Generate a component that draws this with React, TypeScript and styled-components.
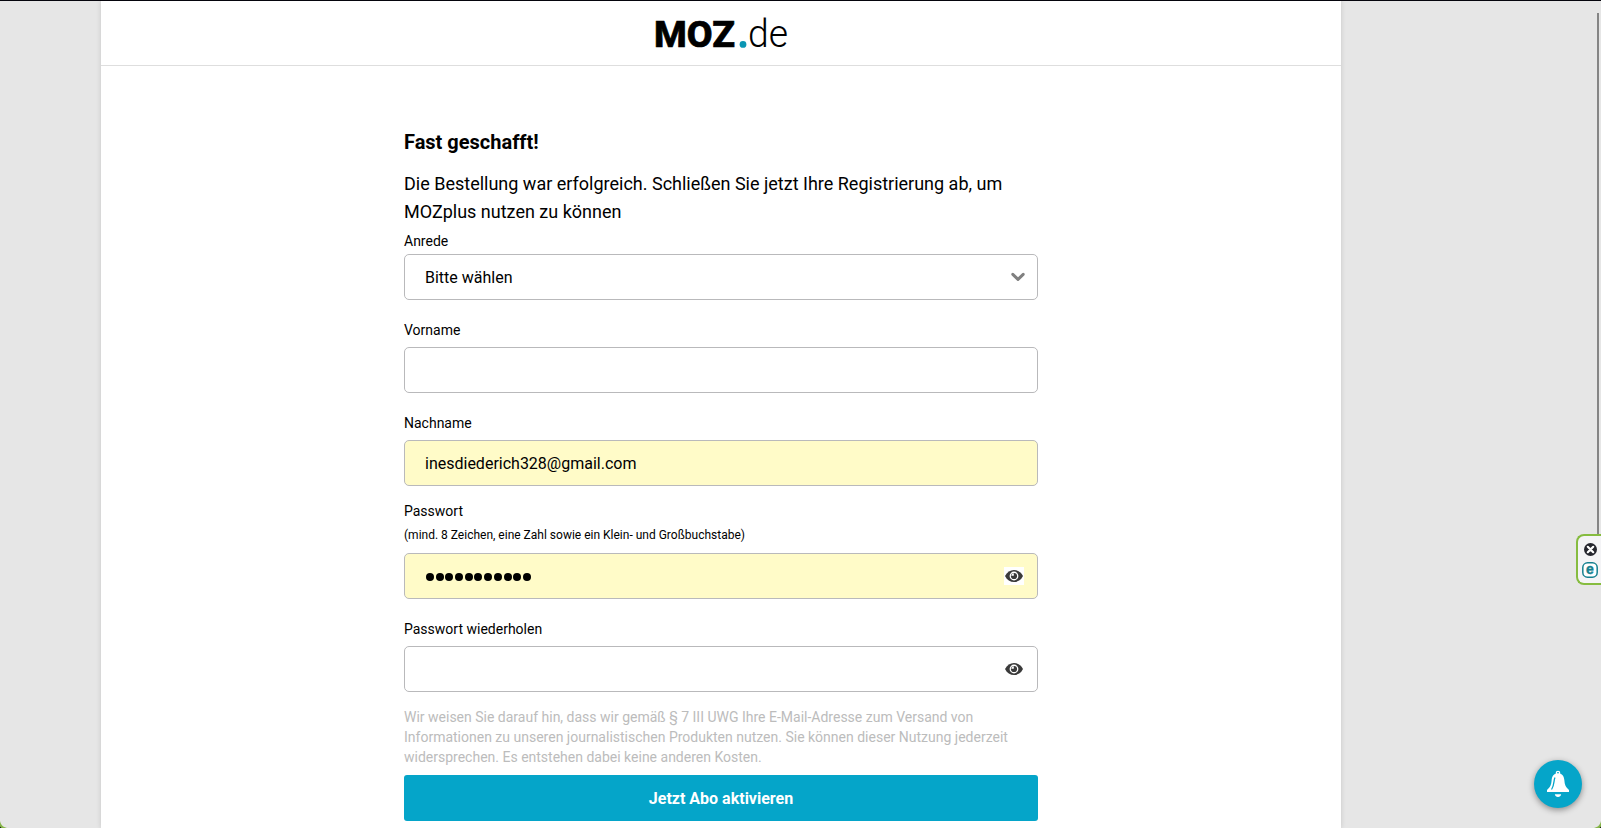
import React from "react";
import styled, { createGlobalStyle, css } from "styled-components";

const GlobalStyle = createGlobalStyle`
  *, *::before, *::after { box-sizing: border-box; }
  html, body, #root { height: 100%; }
  body {
    margin: 0;
    overflow: hidden;
    background: #e6e6e6;
    color: #000;
    font-family: Roboto, "Liberation Sans", sans-serif;
  }
`;

const Page = styled.div`
  position: relative;
  height: 100vh;
  overflow: hidden;
  border-top: 1px solid #05040c;
  padding-left: 101px;
`;

const Sheet = styled.main`
  width: 1240px;
  height: 100%;
  background: #fff;
  box-shadow: 0 0 5px rgba(0, 0, 0, 0.14);
`;

const Header = styled.header`
  display: flex;
  justify-content: center;
  height: 65px;
  border-bottom: 1px solid #dedede;
`;

const Form = styled.form`
  display: flex;
  flex-direction: column;
  width: 634px;
  margin: 0 auto;
  padding-top: 62px;
`;

const Title = styled.h1`
  margin: 0 0 14px;
  font-size: 20px;
  line-height: 28px;
  font-weight: 700;
`;

const Intro = styled.p`
  margin: 0;
  font-size: 18px;
  line-height: 28px;
`;

const Field = styled.div<{ $before: number; $gap?: number }>`
  display: flex;
  flex-direction: column;
  margin-top: ${(p) => p.$before}px;
  gap: ${(p) => p.$gap ?? 7}px;
`;

const Label = styled.label`
  font-size: 14px;
  line-height: 20px;
`;

const Hint = styled.small`
  display: block;
  margin-top: 5px;
  margin-bottom: 2px;
  font-size: 12px;
  line-height: 18px;
`;

const Control = styled.div<{ $filled?: boolean }>`
  display: flex;
  align-items: center;
  justify-content: space-between;
  height: 46px;
  padding: 0 12px 0 20px;
  border: 1px solid #b9b9bb;
  border-radius: 5px;
  background: #fff;
  font-size: 16px;
  ${(p) =>
    p.$filled &&
    css`
      background: #fffbc8;
    `}
`;

const Mask = styled.div`
  display: flex;
  gap: 1.7px;
  padding: 2px 0 0 1px;
`;

const MaskDot = styled.span`
  width: 8px;
  height: 8px;
  border-radius: 50%;
  background: #000;
`;

const Reveal = styled.span`
  display: flex;
  align-items: center;
  justify-content: center;
  width: 20px;
  height: 18px;
  margin-right: 1px;
  background: #fff;
`;

const Notice = styled.p`
  margin: 15px 0 8px;
  color: #bcbcbc;
  font-size: 14px;
  line-height: 20px;
`;

const Submit = styled.button`
  height: 46px;
  border: 0;
  border-radius: 3px;
  background: #05a5c9;
  color: #fff;
  font: 700 16px Roboto, "Liberation Sans", sans-serif;
`;

const ScrollThumb = styled.div`
  position: absolute;
  top: 12px;
  right: 2px;
  width: 2px;
  height: 525px;
  background: #858585;
`;

const SideTab = styled.aside`
  position: absolute;
  top: 533px;
  right: 0;
  display: flex;
  flex-direction: column;
  align-items: center;
  gap: 6px;
  width: 25px;
  height: 51px;
  padding: 7px 3px 0 4px;
  border: 2px solid #86bc40;
  border-right: 0;
  border-radius: 8px 0 0 8px;
  background: #f4f4f6;
`;

const BellButton = styled.div`
  position: absolute;
  right: 19px;
  bottom: 20px;
  width: 48px;
  height: 48px;
  border-radius: 50%;
  background: #05a5c9;
  box-shadow: 0 2px 6px rgba(0, 0, 0, 0.4);
`;

const Corner = styled.svg<{ $side: "left" | "right" }>`
  position: absolute;
  bottom: 0;
  ${(p) => p.$side}: 0;
  ${(p) => p.$side === "right" && "transform: scaleX(-1);"}
`;

const Logo = () => (
  <svg width="140" height="64" viewBox="0 0 140 64" aria-label="MOZ.de">
    <text
      x="3"
      y="45.700"
      fontFamily="Roboto"
      fontWeight="800"
      fontSize="37.500"
      textLength="81"
      lengthAdjust="spacingAndGlyphs"
      stroke="#000"
      strokeWidth=".7"
    >
      MOZ
    </text>
    <circle cx="92" cy="43.4" r="3.4" fill="#0a96b4" />
    <text x="97" y="46" fontFamily="Roboto" fontWeight="300" fontSize="38" textLength="40" lengthAdjust="spacingAndGlyphs">
      de
    </text>
  </svg>
);

const Chevron = () => (
  <svg width="14" height="10" viewBox="0 0 14 10" fill="none" stroke="#808080" strokeWidth="3">
    <path d="M1.8 2.300 7 7.300 12.2 2.300" strokeLinejoin="round" strokeLinecap="round" />
  </svg>
);

const Eye = () => (
  <Reveal>
    <svg width="18" height="14" viewBox="0 0 18 14">
      <path d="M0 7C2 3 5.2 1 9 1s7 2 9 6c-2 4-5.200 6-9 6S2 11 0 7Z" fill="#3a3a3a" />
      <circle cx="9" cy="7" r="4.400" fill="#fff" />
      <circle cx="9" cy="7" r="3.100" fill="#3a3a3a" />
      <path d="M6.300 6.700A2.500 2.500 0 0 1 8.800 4.300V6.700Z" fill="#fff" />
    </svg>
  </Reveal>
);

const CloseIcon = () => (
  <svg width="13" height="13" viewBox="0 0 13 13">
    <circle cx="6.500" cy="6.500" r="6.500" fill="#25262e" />
    <path d="m3.800 3.800 5.400 5.400m0-5.400-5.400 5.400" stroke="#fff" strokeWidth="2.200" strokeLinecap="round" />
  </svg>
);

const BadgeIcon = () => (
  <svg width="16" height="16" viewBox="0 0 16 16">
    <rect x=".8" y=".8" width="14.400" height="14.400" rx="4.800" fill="#fff" stroke="#15808f" strokeWidth="1.500" />
    <text
      x="8"
      y="11.800"
      textAnchor="middle"
      fontFamily="Liberation Sans"
      fontWeight="700"
      fontSize="14"
      fill="#15808f"
      stroke="#15808f"
      strokeWidth=".4"
    >
      e
    </text>
  </svg>
);

const Bell = () => (
  <svg width="48" height="48" viewBox="0 0 48 48" fill="#fff">
    <circle cx="24" cy="13" r="1.700" fill="none" stroke="#fff" strokeWidth="1.200" />
    <path d="M24 13.300c-4.200 0-6 3-6.400 7.300-.4 4.400-1.100 6.300-4.600 9.400v2h22v-2c-3.500-3.100-4.200-5-4.600-9.400-.4-4.300-2.200-7.300-6.400-7.300Z" />
    <path d="M20.800 18c-1.100 2.400-.5 7.200-3 11" fill="none" stroke="#05a5c9" strokeWidth="1.300" strokeLinecap="round" />
    <path d="M20.800 34.200h6.400c-.4 1.700-1.500 2.800-3.200 2.800s-2.800-1.100-3.200-2.800Z" />
  </svg>
);

const CornerMark = ({ side }: { side: "left" | "right" }) => (
  <Corner $side={side} width="7" height="7" viewBox="0 0 7 7">
    <path d="M0 0C1 4 3 6 7 7H0Z" fill="#86b54a" />
    <path d="M0 5.500 1.500 7H0Z" fill="#111" />
  </Corner>
);

export default function App() {
  return (
    <>
      <GlobalStyle />
      <Page>
        <Sheet>
          <Header>
            <Logo />
          </Header>
          <Form>
            <Title>Fast geschafft!</Title>
            <Intro>
              Die Bestellung war erfolgreich. Schließen Sie jetzt Ihre Registrierung ab, um MOZplus nutzen zu können
            </Intro>
            <Field $before={5} $gap={3}>
              <Label>Anrede</Label>
              <Control>
                Bitte wählen
                <Chevron />
              </Control>
            </Field>
            <Field $before={20}>
              <Label>Vorname</Label>
              <Control />
            </Field>
            <Field $before={20}>
              <Label>Nachname</Label>
              <Control $filled>inesdiederich328@gmail.com</Control>
            </Field>
            <Field $before={15}>
              <Label>
                Passwort
                <Hint>(mind. 8 Zeichen, eine Zahl sowie ein Klein- und Großbuchstabe)</Hint>
              </Label>
              <Control $filled>
                <Mask>
                  {Array.from({ length: 11 }, (_, i) => (
                    <MaskDot key={i} />
                  ))}
                </Mask>
                <Eye />
              </Control>
            </Field>
            <Field $before={20}>
              <Label>Passwort wiederholen</Label>
              <Control>
                <span />
                <Eye />
              </Control>
            </Field>
            <Notice>
              Wir weisen Sie darauf hin, dass wir gemäß § 7 III UWG Ihre E-Mail-Adresse zum Versand von Informationen
              zu unseren journalistischen Produkten nutzen. Sie können dieser Nutzung jederzeit widersprechen. Es
              entstehen dabei keine anderen Kosten.
            </Notice>
            <Submit type="button">Jetzt Abo aktivieren</Submit>
          </Form>
        </Sheet>
        <ScrollThumb />
        <SideTab>
          <CloseIcon />
          <BadgeIcon />
        </SideTab>
        <BellButton>
          <Bell />
        </BellButton>
        <CornerMark side="left" />
        <CornerMark side="right" />
      </Page>
    </>
  );
}
